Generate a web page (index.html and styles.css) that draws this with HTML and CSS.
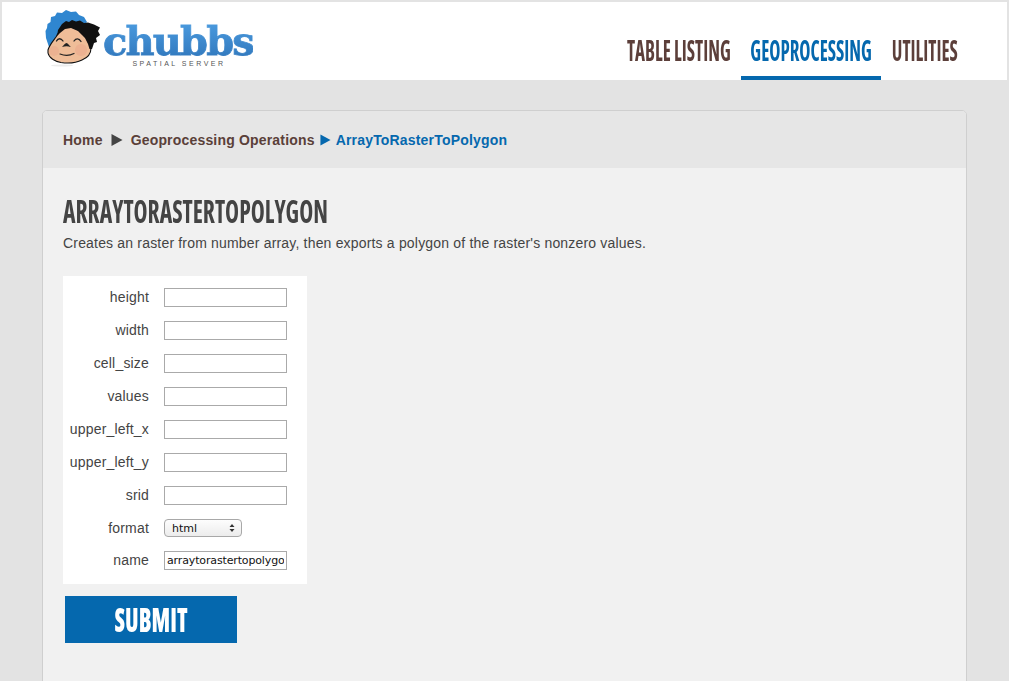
FILE: index.html
```html
<!DOCTYPE html>
<html lang="en">
<head>
<meta charset="utf-8">
<title>Chubbs Spatial Server</title>
<link rel="stylesheet" href="styles.css">
</head>
<body>
<header class="site-header">
  <a class="logo" href="#">
    <svg class="logo-face" viewBox="44 8 60 60" width="60" height="60" aria-hidden="true">
      <ellipse cx="62" cy="65.500" rx="11" ry="1" fill="#ececec"/>
      <path d="M46 38 L45.500 31 L47 28 L47.500 24 L50.500 22 L51 17 L55 16 L57 12.500 L62 13 L66 10 L71 12 L76 11.500 L79 15 L84 17 L87 22 L70 40 L56 46 L49 47 Z" fill="#2f86d0"/>
      <path d="M48 50 C49.500 45 53 41 56 37 C58 33 60 30 64 28 C70 26 77 28 82 33 C86 37 90 43 91 48 C91 54 87 58 82 60 C76 63 68 63.500 61 62.500 C55 61.500 49 58 48 53 Z" fill="#efbd98" stroke="#111" stroke-width="1.100"/>
      <circle cx="54" cy="51" r="5" fill="#e9a98c" opacity=".55"/>
      <circle cx="81" cy="50" r="6" fill="#e9a98c" opacity=".6"/>
      <path d="M57 36 L58 30 L62 24 L66 21 L69 22 L72 20 L76 21.500 L80 20.500 L84 23 L88 22.500 L94 24.500 L100 27.500 L98 31 L100 35 L96 38 L97 42 L94 43 L92 49 L89.500 49 L88 44 L85 38 L78 31 L71 28 L65 29 L60 33 Z" fill="#111"/>
      <path d="M56.500 41 C58 38 61 38 63 41 M74 41 C76 38 79 38 81 41.500" fill="none" stroke="#222" stroke-width="1.300" stroke-linecap="round"/>
      <path d="M62 47 C63.500 45.500 65 43 66.500 43 C68 43 69 45.500 71 47 C68 46 65 46 62 47 Z" fill="#222"/>
      <path d="M60 54 C64 55.500 70 55.500 74 53.500" fill="none" stroke="#222" stroke-width="1.200" stroke-linecap="round"/>
    </svg>
    <span class="logo-words">
      <span class="logo-name">chubbs</span>
      <span class="logo-tag">SPATIAL SERVER</span>
    </span>
  </a>
  <nav class="main-nav">
    <a class="nav-item nav-table" href="#"><span class="nav-label">TABLE LISTING</span></a>
    <a class="nav-item nav-geo is-active" href="#"><span class="nav-label">GEOPROCESSING</span></a>
    <a class="nav-item nav-util" href="#"><span class="nav-label">UTILITIES</span></a>
  </nav>
</header>

<main class="card">
  <div class="crumbs">
    <a class="crumb" href="#">Home</a>
    <svg class="crumb-arrow crumb-arrow-first" viewBox="0 0 12 12" width="12" height="12" aria-hidden="true"><path d="M0.500 0 L11.500 6 L0.500 12 Z" fill="#444"/></svg>
    <a class="crumb" href="#">Geoprocessing Operations</a>
    <svg class="crumb-arrow" viewBox="0 0 12 12" width="11" height="12" aria-hidden="true"><path d="M0.500 0 L11.500 6 L0.500 12 Z" fill="#0568ae"/></svg>
    <a class="crumb is-current" href="#">ArrayToRasterToPolygon</a>
  </div>
  <section class="content">
    <h1 class="title"><span class="title-text">ARRAYTORASTERTOPOLYGON</span></h1>
    <p class="desc">Creates an raster from number array, then exports a polygon of the raster's nonzero values.</p>
    <form class="op-form">
      <div class="fields">
        <label class="field-label" for="f1">height</label><input class="field-input" id="f1" type="text">
        <label class="field-label" for="f2">width</label><input class="field-input" id="f2" type="text">
        <label class="field-label" for="f3">cell_size</label><input class="field-input" id="f3" type="text">
        <label class="field-label" for="f4">values</label><input class="field-input" id="f4" type="text">
        <label class="field-label" for="f5">upper_left_x</label><input class="field-input" id="f5" type="text">
        <label class="field-label" for="f6">upper_left_y</label><input class="field-input" id="f6" type="text">
        <label class="field-label" for="f7">srid</label><input class="field-input" id="f7" type="text">
        <label class="field-label" for="f8">format</label>
        <span class="select-wrap">
          <select class="field-select" id="f8"><option>html</option></select>
          <svg class="select-arrows" viewBox="0 0 6 10" width="6" height="10" aria-hidden="true"><path d="M3 1 L5.500 4 L0.500 4 Z M3 9 L5.500 6 L0.500 6 Z" fill="#333"/></svg>
        </span>
        <label class="field-label" for="f9">name</label><input class="field-input" id="f9" type="text" value="arraytorastertopolygon">
      </div>
      <button class="submit" type="button"><span class="submit-label">SUBMIT</span></button>
    </form>
  </section>
</main>
</body>
</html>
```

FILE: styles.css
```css
* { box-sizing: border-box; }
html, body { margin: 0; height: 681px; overflow: hidden; }
body {
  background: #e3e3e3;
  padding: 2px 2px 0;
  font-family: "Liberation Sans", Arial, sans-serif;
  color: #444;
}
a { text-decoration: none; color: inherit; }

.site-header {
  height: 78px;
  background: #fff;
  display: flex;
  justify-content: space-between;
  align-items: stretch;
  padding: 0 39px 0 42px;
}
.logo { display: flex; align-items: flex-start; }
.logo-face { margin-top: 6px; flex: none; }
.logo-words { display: flex; flex-direction: column; align-items: center; width: 150px; }
.logo-name {
  font-family: "DejaVu Serif", serif;
  font-weight: 700;
  font-size: 40px;
  line-height: 36px;
  letter-spacing: -1.800px;
  margin: 21px 0 0 -2px;
  -webkit-text-stroke: 0.8px transparent;
  background: linear-gradient(#4a9ade, #3178bd);
  -webkit-background-clip: text;
  background-clip: text;
  color: transparent;
}
.logo-tag {
  font-size: 7px;
  line-height: 8px;
  letter-spacing: 2.500px;
  color: #555;
  margin-top: 1px;
}

.main-nav { display: flex; align-items: stretch; }
.nav-item {
  display: flex;
  justify-content: center;
  font-family: "Open Sans", sans-serif;
  font-stretch: 75%;
  font-weight: 700;
  font-size: 28px;
  line-height: 30px;
  color: #5c3f3a;
  padding-top: 33px;
  border-bottom: 4px solid transparent;
}
.nav-table { width: 125px; }
.nav-geo { width: 140px; }
.nav-util { width: 87px; }
.nav-label { flex: none; white-space: nowrap; transform: scaleX(.675); height: 30px; }
.nav-item.is-active { color: #0568ae; border-bottom-color: #0568ae; }

.card {
  margin: 30px 40px 0;
  height: 640px;
  background: #f1f1f1;
  border: 1px solid #cfcfcf;
  border-radius: 5px;
}
.crumbs {
  height: 57px;
  background: #e6e6e6;
  border-radius: 4px 4px 0 0;
  padding: 0 20px;
  display: flex;
  align-items: center;
  font-size: 14px;
  font-weight: 700;
  letter-spacing: .18px;
  color: #5a4039;
}
.crumb-arrow { flex: none; margin: 0 5px; }
.crumb-arrow-first { margin: 0 8px; }
.crumb.is-current { color: #0568ae; }

.content { padding: 26px 20px 0; }
.title {
  margin: 0;
  font-family: "Open Sans", sans-serif;
  font-stretch: 75%;
  font-weight: 700;
  font-size: 32px;
  line-height: 34px;
  color: #444;
  white-space: nowrap;
}
.title-text { display: inline-block; transform: scaleX(.74); transform-origin: left center; }
.desc { margin: 6px 0 0; font-size: 14px; line-height: 18px; letter-spacing: .18px; color: #444; }

.op-form { margin-top: 24px; }
.fields {
  width: 244px;
  background: #fff;
  padding: 12px 20px 14px 0;
  display: grid;
  grid-template-columns: 86px 123px;
  column-gap: 15px;
  row-gap: 14px;
  align-items: start;
}
.field-label { text-align: right; font-size: 14px; line-height: 18px; letter-spacing: .18px; color: #444; white-space: nowrap; }
.field-input {
  width: 123px;
  height: 19px;
  border: 1px solid #aaa;
  background: #fff;
  padding: 0 2px;
  margin: 0;
  border-radius: 0;
  font-family: "DejaVu Sans", sans-serif;
  font-size: 11px;
  letter-spacing: -.14px;
  color: #111;
  outline: none;
}
.select-wrap { display: block; position: relative; width: 78px; height: 18px; }
.field-select {
  appearance: none;
  -webkit-appearance: none;
  display: block;
  width: 78px;
  height: 18px;
  margin: 0;
  padding: 0 0 0 7px;
  border: 1px solid #a8a8a8;
  border-radius: 4px;
  background: linear-gradient(#fdfdfd, #ececec);
  font-family: "DejaVu Sans", sans-serif;
  font-size: 11px;
  color: #111;
}
.select-arrows { position: absolute; right: 7px; top: 4px; }

.submit {
  display: flex;
  justify-content: center;
  align-items: center;
  width: 172px;
  height: 47px;
  margin: 12px 0 0 2px;
  padding: 0;
  border: 0;
  background: #0568ae;
  color: #fff;
  font-family: "Open Sans", sans-serif;
  font-stretch: 75%;
  font-weight: 800;
  font-size: 33px;
}
.submit-label { flex: none; transform: scaleX(.7); }
```
